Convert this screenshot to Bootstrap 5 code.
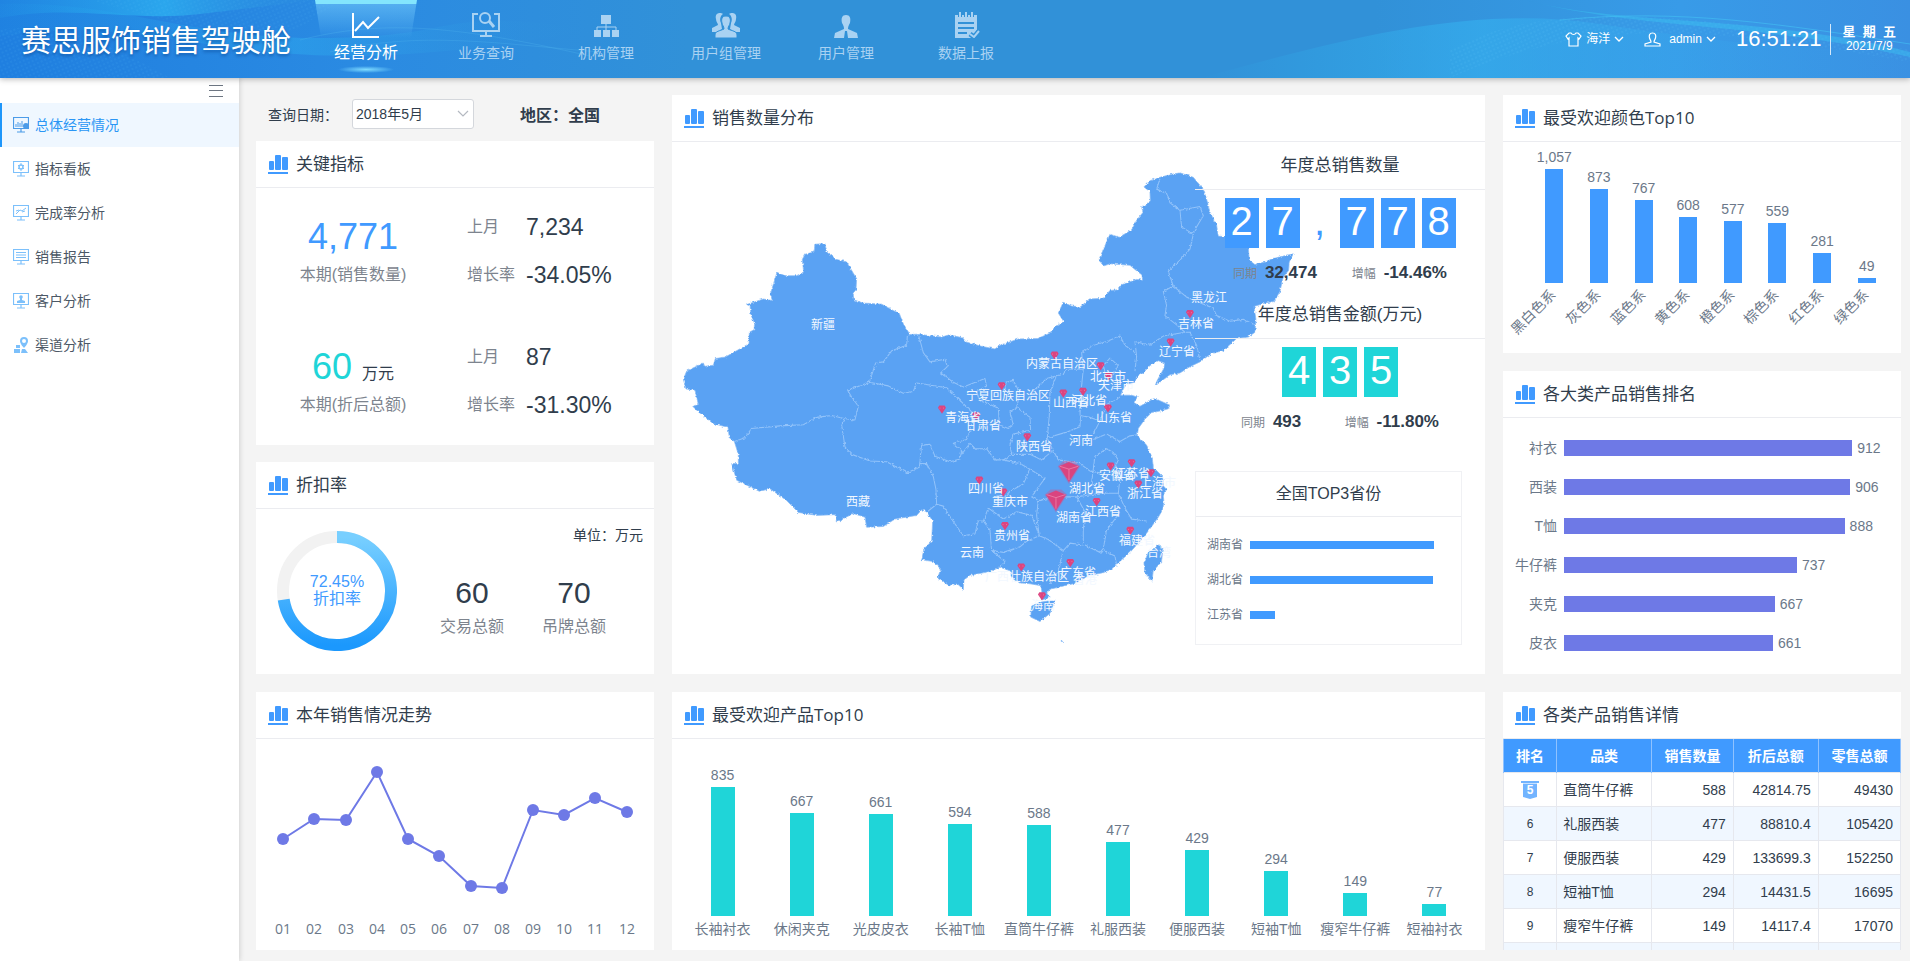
<!DOCTYPE html>
<html lang="zh-CN">
<head>
<meta charset="utf-8">
<meta name="viewport" content="width=device-width, initial-scale=1">
<title>赛思服饰销售驾驶舱</title>
<link href="https://cdn.jsdelivr.net/npm/bootstrap@5.3.0/dist/css/bootstrap.min.css" rel="stylesheet">
<style>
:root{--blue:#409aff;--teal:#1fd5d8;--violet:#6e79e6;--ink:#303d4c;--muted:#7d848e;--axis:#6b7889;--line:#ebecf0}
body{font-family:"Liberation Sans","Noto Sans CJK SC",sans-serif;font-size:14px;line-height:20px;color:var(--ink);background:#f4f4f4}
a{color:inherit;text-decoration:none}
svg{display:block}
.fs-12{font-size:12px}.fs-16{font-size:16px}.fs-23{font-size:23px}
/* top bar */
.topbar{height:78px;background:linear-gradient(90deg,#1f7fe0 0,#2b8be2 20%,#3191d8 36%,#3191d8 72%,#389be8 88%,#3a90e2 100%);color:#fff;box-shadow:0 1px 6px rgba(0,0,0,.3);z-index:3}
.waves{position:absolute;inset:0;width:100%;height:78px}
.brand{width:306px;padding-left:21px;padding-top:4px;font-size:30px;line-height:44px;text-shadow:0 2px 3px rgba(0,50,120,.45)}
.tab{width:120px;height:78px;padding-top:12px;color:#a9d2f2}
.tab svg{width:28px;height:26px;margin-bottom:5px}
.tab.on{color:#fff;font-size:16px}
.tab.on::before{content:"";position:absolute;z-index:-1;top:0;left:9px;right:9px;height:38px;border-top:4px solid #83e5fd;background:linear-gradient(rgba(125,210,255,.5),rgba(125,210,255,0));clip-path:polygon(0 0,100% 0,94% 100%,6% 100%)}
.tab.on::after{content:"";position:absolute;left:32px;bottom:5px;width:56px;height:7px;background:radial-gradient(closest-side,#7fdcff,rgba(127,220,255,0))}
.plain{border:0;background:none;color:inherit;padding:0}
.user-bar{padding-right:14px}
.clock{font-size:22px;margin-left:20px}
.today{border-left:1px solid #d6e9fa;height:31px;line-height:15px;padding-left:12px;font-size:13px}
/* side bar */
.side{width:239px;background:#fff;box-shadow:1px 0 5px rgba(0,0,0,.14);z-index:2}
.side-top{height:25px;padding-right:16px;color:#6d7682}
.side a{height:44px;padding-left:13px;color:#4c5866}
.side a svg{color:#7cc0fb}
.side a.on{background:#eff7ff;color:#2a96f5;border-left:2px solid #1e96fa;padding-left:11px}
.side a.on svg{color:#4b9be8}
/* board */
.board{display:grid;grid-template-columns:minmax(0,398fr) minmax(0,813fr) minmax(0,398fr);gap:18px;padding:17px 9px 11px 17px}
.panel{background:#fff}
.panel-h{height:47px;padding:0 12px;border-bottom:1px solid var(--line)}
.panel-h h2{font-family:"Open Sans","Noto Sans CJK SC",sans-serif;font-size:17px;line-height:24px;font-weight:400;margin:0}
.filter{height:46px;padding:4px 12px 0}
.filter label{line-height:32px;margin-right:14px}
.filter strong{line-height:34px;margin-left:46px}
.month{width:122px;height:30px;border:1px solid #d4d7dc;border-radius:3px;padding:0 10px 0 3px;font-size:14px;line-height:20px;color:var(--ink);box-shadow:none;background-image:url("data:image/svg+xml,%3csvg xmlns='http://www.w3.org/2000/svg' viewBox='0 0 12 8'%3e%3cpath d='M1 1l5 5 5-5' fill='none' stroke='%23b4b9c1' stroke-width='1.2'/%3e%3c/svg%3e");background-size:12px 8px;background-position:right 4px center}
.muted{color:var(--muted)}
.kpi{height:130px;padding-top:27px}
.kpi-main{width:194px}
.kpi-main .note{line-height:32px}
.big{font-size:36px;line-height:44px;height:44px}
.kpi dl{display:grid;grid-template-columns:59px 1fr;align-content:start;row-gap:24px;margin:0 0 0 17px;line-height:24px}
.kpi dt,.kpi dd{margin:0;font-weight:400;height:24px}
.disc{height:165px}
.ring{width:120px;margin:22px 30px 0 21px}
.ring-sum{width:102px}
.sums{margin:30px 0 0 -6px}
.n30{font-size:30px;line-height:36px}
.axis{color:var(--axis)}
/* column charts */
.cols{display:flex}
.cols>div{flex:1 1 0;text-align:center;white-space:nowrap;min-width:0}
.plot{display:flex;flex-direction:column;justify-content:flex-end;align-items:center}
.plot i{display:block;background:var(--teal);width:24px}
.plot span{line-height:16px;margin-bottom:4px}
.goods{height:211px;padding:0 11px}
.goods .plot{height:177px}
.goods .name{line-height:26px;display:flex;justify-content:center}
.tones{height:211px;padding:0 12px 0 29px}
.tones .plot{height:141px}
.tones .plot i{width:18px;background:var(--blue)}
.tones .tilt{position:relative;height:70px}
.tilt span{position:absolute;top:2px;right:calc(50% + 1px);line-height:14px;transform-origin:right center;transform:rotate(-45deg)}
/* row charts */
.rank{padding:10px 21px 12px 0}
.rank li{height:39px}
.rank .name{width:54px;margin-right:7px;text-align:right}
.rank i{height:16px;background:var(--violet);flex:none;margin-right:5px}
/* map */
.stage{display:grid}
.stage>*{grid-area:1/1;min-width:0}
.stats{width:290px;justify-self:end;z-index:1}
.stats h3{font-size:17px;line-height:26px;font-weight:400;margin:0;padding:11px 0 10px;text-align:center;border-bottom:1px solid var(--line)}
.stats h3.second{padding-top:19px}
.digits{display:flex;justify-content:center;gap:7px;height:50px;margin-top:8px}
.digits b{width:34px;background:var(--c);color:#fff;font-size:40px;font-weight:400;line-height:46px;text-align:center}
.digits b.sep{width:26px;background:none;color:var(--c)}
.year{height:20px;margin-top:15px;padding:0 38px}
.year.short{padding:0 46px}
.year b{font-size:17px;margin-left:4px}
.top3{width:267px;height:174px;border:1px solid #f0f1f4;margin-top:39px}
.stats .top3 h3{font-size:16px;line-height:44px;padding:0}
.top3 ul{margin-top:10px}
.top3 li{height:35px;padding-left:11px}
.top3 .name{width:43px}
.top3 i{height:8px;background:var(--blue)}
.map text{font-size:12px;fill:#f2f8ff;text-anchor:middle}
/* table */
.detail{height:211px;overflow:hidden}
.detail table{table-layout:fixed;margin:-1px 0 0;color:var(--ink);border-color:#e6e8ee}
.detail th{background:var(--blue);color:#fff;font-weight:700;text-align:center;border-color:#8fc2ff;padding:0}
.detail td{padding:0 7px;text-align:right;color:var(--ink)}
.detail tr{height:34px;vertical-align:middle}
.detail td:first-child{text-align:center;font-size:12px}
.detail td:nth-child(2){text-align:left;padding-left:6px}
.detail tbody tr:nth-child(even) td{background:#f0f7ff}
</style>
</head>
<body>
<svg width="0" height="0" class="position-absolute">
  <symbol id="bars" viewBox="0 0 20 19"><g fill="#409aff"><rect x="1" y="6" width="5" height="9" rx="1"/><rect x="7" width="6" height="15" rx="1"/><rect x="14" y="2" width="6" height="13" rx="1"/><rect y="17" width="20" height="2"/></g></symbol>
  <symbol id="down" viewBox="0 0 10 6"><path d="M1 1l4 4 4-4" fill="none" stroke="currentColor" stroke-width="1.3"/></symbol>
  <symbol id="screen" viewBox="0 0 16 16"><path d="M.5.5h15v11H.5zM4 15h8M8 12v3" fill="none" stroke="currentColor" stroke-width="1.2"/></symbol>
</svg>
<div class="min-vh-100 d-flex flex-column">
<header class="topbar d-flex align-items-center position-relative">
  <svg class="waves" viewBox="0 0 1910 78" preserveAspectRatio="none" fill="none" aria-hidden="true">
    <defs>
      <linearGradient id="w1"><stop stop-color="#27b4f0" stop-opacity=".1"/><stop offset=".5" stop-color="#2fbdf5" stop-opacity=".6"/><stop offset="1" stop-color="#3191d8" stop-opacity="0"/></linearGradient>
      <linearGradient id="w2"><stop stop-color="#2fb8f0" stop-opacity="0"/><stop offset=".4" stop-color="#35b2f0" stop-opacity=".6"/><stop offset="1" stop-color="#3a9be8" stop-opacity=".1"/></linearGradient>
      <pattern id="dots" width="4" height="4" patternUnits="userSpaceOnUse" patternTransform="rotate(-24)"><circle cx="1" cy="1" r=".7" fill="#5cc4f7"/></pattern>
    </defs>
    <path d="M0 18C70 4 130 22 200 14S290 2 330 0H0z" fill="url(#w1)"/>
    <path d="M0 4C120 0 190 40 330 38S430 6 600 30C500 44 380 70 220 46S70 30 0 36z" fill="url(#w1)" opacity=".5"/>
    <path d="M0 30C60 20 110 44 170 78H0zM90 0C160 20 230 40 300 28L340 0z" fill="url(#dots)" opacity=".25"/>
    <path d="M300 40C380 20 450 24 590 56M330 52C420 30 500 44 600 52" stroke="#4ab0ec" opacity=".35"/>
    <path d="M1200 78C1340 40 1470 4 1600 24S1800 50 1910 52V78z" fill="url(#w2)"/>
    <path d="M1450 50C1540 0 1680 10 1910 50V62C1720 30 1600 12 1450 78z" fill="url(#dots)" opacity=".4"/>
    <path d="M1525 0C1620 26 1760 14 1910 52L1910 57C1760 22 1640 30 1525 0z" fill="#3bc4f2" opacity=".45"/>
    <path d="M1560 20C1680 8 1780 24 1910 44" stroke="#42c1f3" opacity=".6"/>
  </svg>
  <h1 class="brand m-0 fw-normal position-relative text-nowrap">赛思服饰销售驾驶舱</h1>
  <nav class="d-flex position-relative z-1 text-center">
    <a href="#" class="tab on position-relative z-1"><svg class="mx-auto" viewBox="0 0 28 26" fill="none" stroke="currentColor" stroke-width="2"><path d="M1 1v24h26"/><path d="M3 19l8-9 5 6L27 5"/></svg>经营分析</a>
    <a href="#" class="tab"><svg class="mx-auto" viewBox="0 0 28 26" fill="none" stroke="currentColor" stroke-width="2"><path d="M6 2H1v17h26V2h-5M14 19v4M8 24h12"/><circle cx="13" cy="6" r="5"/><path d="M17 9l5 6" stroke-width="3"/></svg>业务查询</a>
    <a href="#" class="tab"><svg class="mx-auto" viewBox="0 0 28 26" fill="currentColor"><path d="M9 3h10v9H9zM2 18h7v7H2zm9 0h7v7h-7zm9 0h7v7h-7z"/><path d="M14 11v7M5 19v-4h19v4" fill="none" stroke="currentColor"/></svg>机构管理</a>
    <a href="#" class="tab"><svg class="mx-auto" viewBox="0 0 28 26" fill="currentColor"><path d="M8 1c-3 0-5 2-4 6 0 3 2 4 2 6l-6 3v4h5l5-3-1-6c-2-4 0-8 2-9-1-1-2-1-3-1zM20 1c3 0 5 2 4 6 0 3-2 4-2 6l6 3v4h-5l-5-3 1-6c2-4 0-8-2-9 1-1 2-1 3-1z"/><path d="M14 4c-4 0-5 3-4 7 0 2 2 3 2 6-4 2-9 2-9 6v3h22v-3c0-4-5-4-9-6 0-3 2-4 2-6 1-4 0-7-4-7z" stroke="#3191d8"/></svg>用户组管理</a>
    <a href="#" class="tab"><svg class="mx-auto" viewBox="0 0 28 26" fill="currentColor"><path d="M14 3c-4 0-5 3-4 8 1 2 2 3 2 6l-9 4-1 5h10l1-7h2l1 7h10l-1-5-9-4c0-3 1-4 2-6 1-5 0-8-4-8z"/></svg>用户管理</a>
    <a href="#" class="tab"><svg class="mx-auto" viewBox="0 0 28 26"><path fill="currentColor" d="M3 3h22v15l-6 8H3z"/><path d="M8 0v5M14 0v5M20 0v5" stroke="#3191d8" stroke-width="4"/><path d="M8 0v5M14 0v5M20 0v5" stroke="currentColor" stroke-width="2"/><path d="M6 11h16M6 16h16M6 21h9" stroke="#3191d8" stroke-width="2"/><path d="M18 22l4 3 5-6" fill="none" stroke="#3191d8" stroke-width="5"/><path d="M18 22l4 3 5-6" fill="none" stroke="currentColor" stroke-width="2"/></svg>数据上报</a>
  </nav>
  <div class="user-bar ms-auto d-flex align-items-center position-relative text-nowrap">
    <button class="plain d-flex align-items-center fs-12"><svg width="17" height="15" viewBox="0 0 17 15" fill="none" stroke="currentColor" stroke-width="1.2" class="me-1"><path d="M6 1c1 2 4 2 5 0l2 0 3 3-2 3-1-1v8H4V6L3 7 1 4l3-3z"/></svg><b class="fw-normal me-1">海洋</b><svg width="10" height="6"><use href="#down"/></svg></button>
    <button class="plain d-flex align-items-center fs-12 ms-3"><svg width="17" height="15" viewBox="0 0 17 15" fill="none" stroke="currentColor" stroke-width="1.2" class="ms-1 me-2"><path d="M8.500 1C5 1 5 4 5.500 6S7 8 7 10l-6 2v2h15v-2l-6-2c0-2 1-2 1.500-4S12 1 8.500 1z"/></svg><b class="fw-normal me-1">admin</b><svg width="10" height="6"><use href="#down"/></svg></button>
    <time class="clock me-2">16:51:21</time>
    <div class="today fw-bold text-center"><div>星&nbsp; 期&nbsp; 五</div><div class="fs-12 fw-normal">2021/7/9</div></div>
  </div>
</header>

<div class="d-flex flex-grow-1">
<aside class="side flex-shrink-0">
  <div class="side-top d-flex justify-content-end align-items-center"><button class="plain" aria-label="收起菜单"><svg width="14" height="12" stroke="currentColor"><path d="M0 .5h14M0 5.500h14M0 11.500h14"/></svg></button></div>
  <nav class="d-flex flex-column">
    <a href="#" class="on d-flex align-items-center"><svg class="me-1" width="18" height="16" viewBox="0 0 18 16"><use href="#screen" width="16"/><path d="M3 10V7m2 3V5m2 5V6m2 4V4" stroke="currentColor"/><circle cx="13" cy="9" r="3" fill="currentColor"/></svg>总体经营情况</a>
    <a href="#" class="d-flex align-items-center"><svg class="me-1" width="18" height="16" viewBox="0 0 18 16" fill="none" stroke="currentColor"><use href="#screen" width="16"/><circle cx="8" cy="6" r="2" stroke-width="1.500"/><path d="M8 2v2m0 4v2M5 4l1 1m4 2l1 1m0-4l-1 1M6 7L5 8"/></svg>指标看板</a>
    <a href="#" class="d-flex align-items-center"><svg class="me-1" width="18" height="16" viewBox="0 0 18 16" fill="none" stroke="currentColor"><use href="#screen" width="16"/><path d="M3 9l4-4 2 1 4-3M3 6l3-1M9 7l3-1"/></svg>完成率分析</a>
    <a href="#" class="d-flex align-items-center"><svg class="me-1" width="18" height="16" viewBox="0 0 18 16" fill="none" stroke="currentColor"><use href="#screen" width="16"/><path d="M0 .5h16M3 3.500h10M3 6h10M3 8.500h10"/></svg>销售报告</a>
    <a href="#" class="d-flex align-items-center"><svg class="me-1" width="18" height="16" viewBox="0 0 18 16" fill="currentColor"><use href="#screen" width="16"/><circle cx="8" cy="4" r="1.800"/><path d="M7 5h2v2l3 1v2H4V8l3-1z"/></svg>客户分析</a>
    <a href="#" class="d-flex align-items-center"><svg class="me-1" width="18" height="16" viewBox="0 0 18 16" fill="currentColor"><path fill-rule="evenodd" d="M11 0a4 4 0 014 4c0 3-4 7-4 7S7 7 7 4a4 4 0 014-4zm0 2a2 2 0 100 4 2 2 0 000-4zM3 8h4v3H3zM1 12h6v4H1zm8 0h3l3 4H8z"/></svg>渠道分析</a>
  </nav>
</aside>

<main class="board flex-grow-1">
  <!-- left column -->
  <div class="d-flex flex-column">
    <form class="filter d-flex align-items-start">
      <label for="month" class="text-nowrap">查询日期：</label>
      <select id="month" class="form-select month flex-shrink-0"><option>2018年5月</option></select>
      <strong class="fs-16 text-nowrap">地区：全国</strong>
    </form>
    <section class="panel pb-5 mb-0">
      <div class="panel-h d-flex align-items-center gap-2"><svg width="20" height="19"><use href="#bars"/></svg><h2>关键指标</h2></div>
      <div class="kpi d-flex">
        <div class="kpi-main text-center"><div class="big" style="color:var(--blue)">4,771</div><div class="note fs-16 muted">本期(销售数量)</div></div>
        <dl><dt class="fs-16 muted">上月</dt><dd class="fs-23">7,234</dd><dt class="fs-16 muted">增长率</dt><dd class="fs-23">-34.05%</dd></dl>
      </div>
      <div class="kpi d-flex" style="height:79px">
        <div class="kpi-main text-center"><div class="big" style="color:var(--teal)">60 <small class="fs-16" style="color:var(--ink)">万元</small></div><div class="note fs-16 muted">本期(折后总额)</div></div>
        <dl><dt class="fs-16 muted">上月</dt><dd class="fs-23">87</dd><dt class="fs-16 muted">增长率</dt><dd class="fs-23">-31.30%</dd></dl>
      </div>
    </section>
    <section class="panel" style="margin-top:17px">
      <div class="panel-h d-flex align-items-center gap-2"><svg width="20" height="19"><use href="#bars"/></svg><h2>折扣率</h2></div>
      <div class="disc d-flex">
        <svg class="ring flex-shrink-0" height="120" viewBox="0 0 120 120" text-anchor="middle">
          <defs><linearGradient id="rg" x1="0" y1="0" x2="0" y2="1"><stop stop-color="#78cfff"/><stop offset="1" stop-color="#1b98fd"/></linearGradient></defs>
          <circle cx="60" cy="60" r="54" fill="none" stroke="#f2f2f2" stroke-width="12"/>
          <path d="M60 6A54 54 0 1 1 6.700 68.600" fill="none" stroke="url(#rg)" stroke-width="12"/>
          <text x="60" y="56" font-size="16" fill="#409aff">72.45%</text><text x="60" y="73" font-size="16" fill="#409aff">折扣率</text>
        </svg>
        <div class="flex-grow-1">
          <div class="text-end" style="padding:16px 11px 0 0">单位：万元</div>
          <div class="sums d-flex text-center">
            <div class="ring-sum"><div class="n30">60</div><div class="fs-16 muted" style="line-height:32px">交易总额</div></div>
            <div class="ring-sum"><div class="n30">70</div><div class="fs-16 muted" style="line-height:32px">吊牌总额</div></div>
          </div>
        </div>
      </div>
    </section>
    <section class="panel" style="margin-top:18px">
      <div class="panel-h d-flex align-items-center gap-2"><svg width="20" height="19"><use href="#bars"/></svg><h2>本年销售情况走势</h2></div>
      <svg class="w-100" viewBox="0 0 398 211">
        <path d="M27 100L58 80L90 81L121 33L152 100L183 117L215 147L246 149L277 71L308 76L339 59L371 73" fill="none" stroke="#6e79e6" stroke-width="2"/>
        <g fill="#6e79e6"><circle cx="27" cy="100" r="6"/><circle cx="58" cy="80" r="6"/><circle cx="90" cy="81" r="6"/><circle cx="121" cy="33" r="6"/><circle cx="152" cy="100" r="6"/><circle cx="183" cy="117" r="6"/><circle cx="215" cy="147" r="6"/><circle cx="246" cy="149" r="6"/><circle cx="277" cy="71" r="6"/><circle cx="308" cy="76" r="6"/><circle cx="339" cy="59" r="6"/><circle cx="371" cy="73" r="6"/></g>
        <g font-family="Open Sans" font-size="14" fill="#6b7889" text-anchor="middle"><text x="27" y="195">01</text><text x="58" y="195">02</text><text x="90" y="195">03</text><text x="121" y="195">04</text><text x="152" y="195">05</text><text x="183" y="195">06</text><text x="215" y="195">07</text><text x="246" y="195">08</text><text x="277" y="195">09</text><text x="308" y="195">10</text><text x="339" y="195">11</text><text x="371" y="195">12</text></g>
      </svg>
    </section>
  </div>

  <!-- middle column -->
  <div class="d-flex flex-column" style="gap:18px">
    <section class="panel">
      <div class="panel-h d-flex align-items-center gap-2"><svg width="20" height="19"><use href="#bars"/></svg><h2>销售数量分布</h2></div>
      <div class="stage">
        <svg class="map w-100" viewBox="0 0 813 532">
          <defs>
            <filter id="rough" x="-2%" y="-2%" width="104%" height="104%"><feTurbulence type="fractalNoise" baseFrequency=".12" numOctaves="3" seed="4" result="n"/><feDisplacementMap in="SourceGraphic" in2="n" scale="9" xChannelSelector="R" yChannelSelector="G"/></filter>
            <g id="pin"><path d="M-12-4L-8-10H8L12-4L0 12z" fill="#dc4480"/><path d="M-7-3h2M4-3h2" stroke="#f7a5c0" stroke-width="2"/></g>
            <g id="gem"><path d="M-34-16L-16-30H16L34-16L0 32z" fill="#e2447f" opacity=".35"/><path d="M-30-16L0-27L30-16L0 27z" fill="#d9447f"/><path d="M-28-16L0-8L28-16M0-8V22" fill="none" stroke="#f08ab0" stroke-width="2"/></g>
          </defs>
          <g transform="translate(-2 -52) scale(.3333 .3699)">
            <g filter="url(#rough)">
            <path fill="#5aa2f3" stroke="#8dbdf5" stroke-width="2" stroke-linejoin="round" d="M40 782L50 760 100 738 104 747 130 744 136 726 166 722 237 686 238 655 252 648 254 632 243 608 240 584 230 580 280 565 307 569 301 552 321 493 345 502 380 502 401 492 397 458 405 444 432 438 435 417 465 415 470 438 500 458 530 465 560 510 558 540 549 550 553 568 580 576 635 579 670 596 688 604 700 632 720 661 745 660 815 668 838 662 878 670 888 681 935 693 975 700 990 690 1045 673 1103 672 1138 658 1155 641 1181 626 1165 603 1180 574 1205 584 1232 586 1258 565 1300 563 1320 542 1345 540 1350 528 1400 512 1418 514 1416 500 1395 485 1380 474 1350 472 1320 470 1300 476 1287 458 1320 390 1348 398 1385 378 1400 352 1420 330 1415 318 1441 300 1440 275 1422 262 1440 245 1470 236 1505 228 1530 224 1570 236 1600 268 1610 295 1620 330 1640 365 1645 395 1700 400 1735 425 1738 460 1755 472 1785 465 1810 455 1870 443 1858 465 1856 488 1840 505 1830 545 1812 572 1790 575 1752 585 1758 620 1755 655 1735 668 1700 672 1660 705 1625 712 1590 735 1560 748 1530 765 1500 770 1455 800 1462 785 1482 752 1484 738 1465 732 1440 745 1420 765 1400 775 1395 790 1370 795 1358 812 1352 825 1385 825 1402 830 1392 845 1410 855 1430 845 1450 835 1470 840 1500 852 1495 862 1470 868 1445 872 1425 890 1405 915 1402 935 1430 960 1447 995 1450 1020 1478 1045 1480 1070 1490 1080 1480 1095 1482 1115 1478 1135 1465 1155 1445 1180 1420 1210 1400 1230 1380 1250 1355 1270 1325 1295 1300 1305 1260 1312 1210 1335 1175 1342 1140 1350 1130 1360 1140 1372 1118 1378 1113 1340 1080 1335 1045 1332 1025 1318 1020 1300 990 1290 960 1302 900 1312 882 1325 880 1350 862 1335 838 1340 803 1320 812 1295 790 1275 755 1270 762 1240 785 1220 788 1165 770 1140 755 1135 740 1150 675 1160 640 1180 590 1182 585 1155 550 1145 500 1168 495 1148 440 1150 385 1142 350 1110 300 1078 268 1085 200 1055 185 1010 205 1010 205 985 193 950 178 940 174 912 130 902 85 870 68 855 85 850 75 812 48 808ZM1085 1395L1110 1385 1155 1378 1140 1415 1110 1437 1082 1425ZM1465 1230L1479 1238 1475 1275 1450 1300 1446 1328 1425 1305 1422 1280 1435 1250ZM1174 1487l4 4h-4z"/>
            <path fill="none" stroke="#92c3fa" stroke-width="3" stroke-linejoin="round" d="M193 950L225 940 245 915 330 908 400 905 440 885 485 880 522 888 555 892 565 855 545 830 533 812 598 790 617 738 640 735 665 705 710 690 712 665 720 661M522 888L515 905 525 965 545 985 600 1003 650 1005 680 1020 712 1035 748 1020 755 960 780 958 795 990 840 1005 870 998 875 975 850 955 890 945 905 910 905 870 860 830 830 805 740 792 730 815 700 820 655 800 598 790M748 1010L770 1010 790 1045 798 1080 800 1120 772 1140M800 1120L820 1125 845 1160 880 1205 915 1200 925 1165 940 1165M745 660L760 710 780 735 825 728 832 748 812 765 850 790 880 803 945 780 950 800 920 815 930 840 960 850 985 860 988 905 1015 915 1030 905 1020 870 1040 858 1050 820 1030 785 1010 790 1000 815M1040 858L1080 885 1082 920 1030 930 1020 960 1025 985 1000 1000 975 1000 950 970 915 970 900 955 875 985M1090 815L1130 780 1180 768 1190 755 1240 755M1160 770L1140 820 1138 880 1132 940 1190 925 1230 910 1232 880 1260 885 1290 895M1025 985L1080 985 1115 1000 1135 985 1150 975 1132 942M1150 975L1165 1000 1230 1010 1260 1030 1290 1035M1000 1000L1050 1010 1080 1025 1060 1065 1020 1085 1000 1105M1080 1025L1125 1050 1100 1080 1085 1100 1105 1110 1100 1150 1108 1205 1135 1215 1180 1245 1200 1225 1240 1230 1240 1190 1245 1140 1220 1100 1160 1100 1105 1110M955 1130L940 1165 960 1190 965 1245 1000 1250 1050 1235 1070 1220 1108 1205 1085 1150 1040 1140 1000 1160ZM965 1245L1005 1275 990 1290M1180 1245L1165 1300 1140 1335M1245 1230L1290 1250 1300 1240 1310 1190 1335 1160 1350 1140M1300 1245L1335 1260 1340 1285M1275 990L1310 970 1330 980 1345 1000 1330 1030 1350 1050 1345 1090 1290 1090 1265 1060ZM1270 945L1310 930 1350 950 1380 935 1402 932M1270 930L1290 895 1310 850 1350 830M1230 880L1235 800 1240 755 1235 710 1270 690 1310 680 1350 665 1365 690 1395 710M1300 745L1320 725 1345 745 1330 770 1305 765ZM1395 760L1400 720 1395 680 1440 690 1480 665 1545 655 1560 655 1580 690 1590 730M1545 655L1520 635 1485 610 1490 580 1480 545 1510 530 1550 560 1630 590 1640 610 1680 625 1720 620 1755 635M1510 530L1495 490 1530 460 1560 430 1570 390 1535 370 1530 325 1590 315 1600 340 1570 385M1530 325L1500 305 1490 280 1460 268 1470 240M1220 1100L1290 1090M1345 1090L1365 1130 1385 1160 1430 1165"/>
            </g>
            <use href="#pin" x="1154" y="717"/><use href="#pin" x="995" y="800"/><use href="#pin" x="816" y="863"/><use href="#pin" x="919" y="881"/><use href="#pin" x="1072" y="938"/><use href="#pin" x="1180" y="820"/><use href="#pin" x="1239" y="815"/><use href="#pin" x="928" y="1055"/><use href="#pin" x="1000" y="1087"/><use href="#pin" x="1005" y="1178"/><use href="#pin" x="1054" y="1290"/><use href="#pin" x="1201" y="1278"/><use href="#pin" x="1116" y="1368"/><use href="#pin" x="1560" y="605"/><use href="#pin" x="1502" y="682"/><use href="#pin" x="1292" y="746"/><use href="#pin" x="1316" y="774"/><use href="#pin" x="1314" y="860"/><use href="#pin" x="1322" y="1017"/><use href="#pin" x="1385" y="1008"/><use href="#pin" x="1443" y="1035"/><use href="#pin" x="1405" y="1066"/><use href="#pin" x="1280" y="1113"/><use href="#pin" x="1381" y="1191"/>
            <use href="#gem" x="1197" y="1033"/><use href="#gem" x="1158" y="1110"/>
          </g>
          <text x="151" y="187">新疆</text><text x="186" y="364">西藏</text><text x="300" y="415">云南</text><text x="390" y="226">内蒙古自治区</text><text x="336" y="258">宁夏回族自治区</text><text x="291" y="280">青海省</text><text x="311" y="288">甘肃省</text><text x="362" y="309">陕西省</text><text x="399" y="265">山西省</text><text x="417" y="263">河北省</text><text x="409" y="303">河南</text><text x="314" y="351">四川省</text><text x="338" y="364">重庆市</text><text x="415" y="351">湖北省</text><text x="402" y="380">湖南省</text><text x="340" y="398">贵州省</text><text x="355" y="439">广西壮族自治区</text><text x="406" y="435">广东省</text><text x="413" y="442">香港</text><text x="371" y="468">海南</text><text x="537" y="160">黑龙江</text><text x="524" y="186">吉林省</text><text x="505" y="214">辽宁省</text><text x="436" y="239">北京市</text><text x="444" y="248">天津市</text><text x="442" y="280">山东省</text><text x="445" y="338">安徽省</text><text x="460" y="336">江苏省</text><text x="486" y="345">上海市</text><text x="473" y="356">浙江省</text><text x="431" y="374">江西省</text><text x="465" y="403">福建省</text><text x="487" y="415">台湾</text>
        </svg>
        <div class="stats">
          <h3>年度总销售数量</h3>
          <div class="digits" style="--c:var(--blue)"><b>2</b><b>7</b><b class="sep">,</b><b>7</b><b>7</b><b>8</b></div>
          <div class="year d-flex justify-content-between align-items-center"><span><span class="fs-12 muted">同期</span> <b>32,474</b></span><span><span class="fs-12 muted">增幅</span> <b>-14.46%</b></span></div>
          <h3 class="second">年度总销售金额(万元)</h3>
          <div class="digits" style="--c:var(--teal)"><b>4</b><b>3</b><b>5</b></div>
          <div class="year short d-flex justify-content-between align-items-center"><span><span class="fs-12 muted">同期</span> <b>493</b></span><span><span class="fs-12 muted">增幅</span> <b>-11.80%</b></span></div>
          <div class="top3">
            <h3>全国TOP3省份</h3>
            <ul class="list-unstyled mb-0 fs-12 axis">
              <li class="d-flex align-items-center"><span class="name">湖南省</span><i style="width:184px"></i></li>
              <li class="d-flex align-items-center"><span class="name">湖北省</span><i style="width:183px"></i></li>
              <li class="d-flex align-items-center"><span class="name">江苏省</span><i style="width:25px"></i></li>
            </ul>
          </div>
        </div>
      </div>
    </section>
    <section class="panel">
      <div class="panel-h d-flex align-items-center gap-2"><svg width="20" height="19"><use href="#bars"/></svg><h2>最受欢迎产品Top10</h2></div>
      <div class="goods cols axis">
        <div><div class="plot"><span>835</span><i style="height:129px"></i></div><span class="name">长袖衬衣</span></div>
        <div><div class="plot"><span>667</span><i style="height:103px"></i></div><span class="name">休闲夹克</span></div>
        <div><div class="plot"><span>661</span><i style="height:102px"></i></div><span class="name">光皮皮衣</span></div>
        <div><div class="plot"><span>594</span><i style="height:92px"></i></div><span class="name">长袖T恤</span></div>
        <div><div class="plot"><span>588</span><i style="height:91px"></i></div><span class="name">直筒牛仔裤</span></div>
        <div><div class="plot"><span>477</span><i style="height:74px"></i></div><span class="name">礼服西装</span></div>
        <div><div class="plot"><span>429</span><i style="height:66px"></i></div><span class="name">便服西装</span></div>
        <div><div class="plot"><span>294</span><i style="height:45px"></i></div><span class="name">短袖T恤</span></div>
        <div><div class="plot"><span>149</span><i style="height:23px"></i></div><span class="name">瘦窄牛仔裤</span></div>
        <div><div class="plot"><span>77</span><i style="height:12px"></i></div><span class="name">短袖衬衣</span></div>
      </div>
    </section>
  </div>

  <!-- right column -->
  <div class="d-flex flex-column" style="gap:18px">
    <section class="panel">
      <div class="panel-h d-flex align-items-center gap-2"><svg width="20" height="19"><use href="#bars"/></svg><h2>最受欢迎颜色Top10</h2></div>
      <div class="tones cols axis">
        <div><div class="plot"><span>1,057</span><i style="height:114px"></i></div><div class="tilt"><span>黑白色系</span></div></div>
        <div><div class="plot"><span>873</span><i style="height:94px"></i></div><div class="tilt"><span>灰色系</span></div></div>
        <div><div class="plot"><span>767</span><i style="height:83px"></i></div><div class="tilt"><span>蓝色系</span></div></div>
        <div><div class="plot"><span>608</span><i style="height:66px"></i></div><div class="tilt"><span>黄色系</span></div></div>
        <div><div class="plot"><span>577</span><i style="height:62px"></i></div><div class="tilt"><span>橙色系</span></div></div>
        <div><div class="plot"><span>559</span><i style="height:60px"></i></div><div class="tilt"><span>棕色系</span></div></div>
        <div><div class="plot"><span>281</span><i style="height:30px"></i></div><div class="tilt"><span>红色系</span></div></div>
        <div><div class="plot"><span>49</span><i style="height:5px"></i></div><div class="tilt"><span>绿色系</span></div></div>
      </div>
    </section>
    <section class="panel">
      <div class="panel-h d-flex align-items-center gap-2"><svg width="20" height="19"><use href="#bars"/></svg><h2>各大类产品销售排名</h2></div>
      <ul class="rank list-unstyled m-0 axis">
        <li class="d-flex align-items-center"><span class="name">衬衣</span><div class="flex-grow-1 d-flex align-items-center"><i style="width:91.2%"></i>912</div></li>
        <li class="d-flex align-items-center"><span class="name">西装</span><div class="flex-grow-1 d-flex align-items-center"><i style="width:90.6%"></i>906</div></li>
        <li class="d-flex align-items-center"><span class="name">T恤</span><div class="flex-grow-1 d-flex align-items-center"><i style="width:88.8%"></i>888</div></li>
        <li class="d-flex align-items-center"><span class="name">牛仔裤</span><div class="flex-grow-1 d-flex align-items-center"><i style="width:73.7%"></i>737</div></li>
        <li class="d-flex align-items-center"><span class="name">夹克</span><div class="flex-grow-1 d-flex align-items-center"><i style="width:66.7%"></i>667</div></li>
        <li class="d-flex align-items-center"><span class="name">皮衣</span><div class="flex-grow-1 d-flex align-items-center"><i style="width:66.1%"></i>661</div></li>
      </ul>
    </section>
    <section class="panel">
      <div class="panel-h d-flex align-items-center gap-2"><svg width="20" height="19"><use href="#bars"/></svg><h2>各类产品销售详情</h2></div>
      <div class="detail">
        <table class="table table-bordered">
          <colgroup><col style="width:13.4%"><col style="width:23.9%"><col style="width:20.6%"><col style="width:21.4%"><col style="width:20.7%"></colgroup>
          <thead><tr><th scope="col">排名</th><th scope="col">品类</th><th scope="col">销售数量</th><th scope="col">折后总额</th><th scope="col">零售总额</th></tr></thead>
          <tbody>
            <tr><td><svg class="mx-auto" width="18" height="18" viewBox="0 0 18 18"><path fill="#72b4ff" d="M0 0h18v2h-2v14l-7 2-7-2V2H0z"/><path d="M2 2.500h14" stroke="#fff" stroke-width=".6"/><text x="9" y="13" font-size="12" font-weight="700" fill="#fff" text-anchor="middle">5</text></svg></td><td>直筒牛仔裤</td><td>588</td><td>42814.75</td><td>49430</td></tr>
            <tr><td>6</td><td>礼服西装</td><td>477</td><td>88810.4</td><td>105420</td></tr>
            <tr><td>7</td><td>便服西装</td><td>429</td><td>133699.3</td><td>152250</td></tr>
            <tr><td>8</td><td>短袖T恤</td><td>294</td><td>14431.5</td><td>16695</td></tr>
            <tr><td>9</td><td>瘦窄牛仔裤</td><td>149</td><td>14117.4</td><td>17070</td></tr>
            <tr><td></td><td></td><td></td><td></td><td></td></tr>
          </tbody>
        </table>
      </div>
    </section>
  </div>
</main>
</div>
</div>
<script src="https://cdn.jsdelivr.net/npm/bootstrap@5.3.0/dist/js/bootstrap.bundle.min.js"></script>
</body>
</html>
